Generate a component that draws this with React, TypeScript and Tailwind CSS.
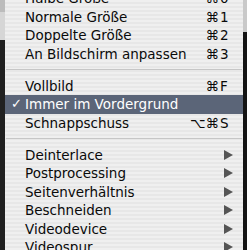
type Item =
  | { kind: "sep" }
  | { kind: "item"; label: string; mods?: string; key?: string; checked?: boolean; active?: boolean; sub?: boolean };

const items: Item[] = [
  { kind: "item", label: "Halbe Größe", mods: "⌘", key: "0" },
  { kind: "item", label: "Normale Größe", mods: "⌘", key: "1" },
  { kind: "item", label: "Doppelte Größe", mods: "⌘", key: "2" },
  { kind: "item", label: "An Bildschirm anpassen", mods: "⌘", key: "3" },
  { kind: "sep" },
  { kind: "item", label: "Vollbild", mods: "⌘", key: "F" },
  { kind: "item", label: "Immer im Vordergrund", checked: true, active: true },
  { kind: "item", label: "Schnappschuss", mods: "⌥⌘", key: "S" },
  { kind: "sep" },
  { kind: "item", label: "Deinterlace", sub: true },
  { kind: "item", label: "Postprocessing", sub: true },
  { kind: "item", label: "Seitenverhältnis", sub: true },
  { kind: "item", label: "Beschneiden", sub: true },
  { kind: "item", label: "Videodevice", sub: true },
  { kind: "item", label: "Videospur", sub: true },
];

const SubArrow = ({ active }: { active?: boolean }) => (
  <svg width="9" height="10" viewBox="0 0 9 10" className="mr-[10px]">
    <path d="M0 0 L9 5 L0 10 Z" fill={active ? "#ffffff" : "#555555"} />
  </svg>
);

export default function App() {
  return (
    <div className="flex w-[247px] h-[250px] overflow-hidden font-['DejaVu_Sans',sans-serif] text-[13.5px]">
      <div className="w-[5px] flex flex-col">
        <div className="h-[12px] bg-[#bcbcbc]" />
        <div className="h-[28px] bg-[#d6d6d6]" />
        <div className="flex-1 bg-[#202020]" />
      </div>

      <div className="w-[238px] flex flex-col bg-[repeating-linear-gradient(180deg,#efefef_0px,#efefef_2px,#e7e7e7_2px,#e7e7e7_4px)]">
        <div className="-mt-[11px] flex flex-col">
          {items.map((it, i) =>
            it.kind === "sep" ? (
              <div key={i} className="h-[13.5px] flex items-center px-[1px]">
                <div className="h-px w-full bg-[#c6c6c6]" />
              </div>
            ) : (
              <div
                key={i}
                className={`h-[18.5px] leading-[18.5px] flex items-center ${
                  it.active ? "bg-[#5b6578] text-white" : "text-[#0a0a0a]"
                }`}
              >
                <span className="w-[20px] pl-[6px] text-[13px]">{it.checked ? "✓" : ""}</span>
                <span className="flex-1 whitespace-nowrap">{it.label}</span>
                {it.key && (
                  <span className="flex mr-[13px]">
                    <span className="text-right">{it.mods}</span>
                    <span className="w-[11px] pl-[1px]">{it.key}</span>
                  </span>
                )}
                {it.sub && <SubArrow active={it.active} />}
              </div>
            )
          )}
        </div>
      </div>

      <div className="w-[4px] flex flex-col">
        <div className="h-[32px] bg-[#c9c9c9]" />
        <div className="flex-1 bg-[#141414]" />
      </div>
    </div>
  );
}
